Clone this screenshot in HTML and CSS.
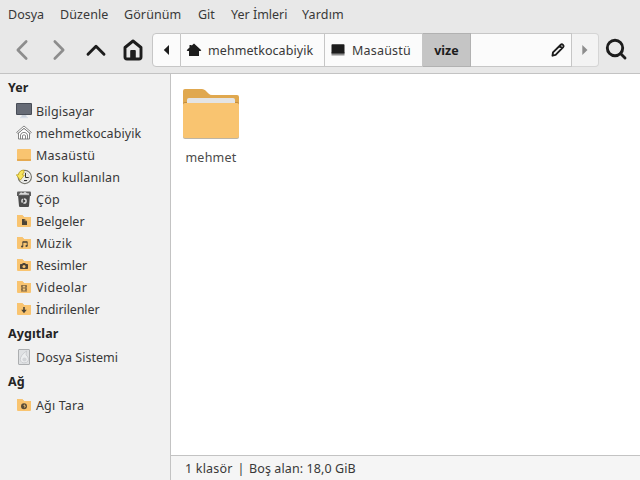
FILE: index.html
```
<!DOCTYPE html>
<html lang="tr">
<head>
<meta charset="utf-8">
<title>vize</title>
<link rel="stylesheet" href="styles.css">
</head>
<body>
<svg class="defs" width="0" height="0">
  <symbol id="folder" viewBox="0 0 16 16"><path fill="#e5ad54" d="M1 3.2Q1 2 2 2h4l2 2h6q1 0 1 1v3H1z"/><path fill="#f9c470" d="M1 3q0-1 1-1h4l2 2h6q1 0 1 1v8q0 1-1 1H2q-1 0-1-1z"/></symbol>
</svg>
<div class="window">
  <nav class="menu">
    <span class="m1">Dosya</span><span class="m2">Düzenle</span><span class="m3">Görünüm</span><span class="m4">Git</span><span class="m5">Yer İmleri</span><span class="m6">Yardım</span>
  </nav>
  <header class="toolbar">
    <svg class="tool dim" viewBox="0 0 24 24"><path d="M16.200 3.500 7.800 12l8.400 8.500"/></svg>
    <svg class="tool dim" viewBox="0 0 24 24"><path d="m7.800 3.500 8.400 8.500-8.400 8.500"/></svg>
    <svg class="tool" viewBox="0 0 24 24"><path d="m4 16.200 8-8 8 8"/></svg>
    <svg class="tool" viewBox="0 0 24 24"><path d="M4 9.500 12 3l8 6.500V19q0 2-2 2H6q-2 0-2-2z"/><path class="solid" d="M9.200 22v-9q0-1 1-1h3.600q1 0 1 1v9z"/></svg>
    <div class="path">
      <span class="seg back"><svg width="16" height="16"><path fill="#1c1c1c" d="M11 3v10L5.800 8z"/></svg></span>
      <span class="seg home"><svg width="16" height="16"><path fill="#1c1c1c" d="m8 1.500 7.300 6.800-.8.700H13v5H9.500v-4h-3v4H3V9H1.500l-.8-.7L3.500 5.600V3h2v.8z"/><path fill="#1c1c1c" d="M5 9h6v5H5z"/></svg><b>mehmetkocabiyik</b></span>
      <span class="seg desk"><svg width="16" height="16"><path fill="#8b8b8b" d="M1.500 10h13v3.500h-13z"/><path fill="#1c1c1c" d="M1.500 3q0-.8.8-.8h11.400q.8 0 .8.800v8.500h-13z"/></svg><b>Masaüstü</b></span>
      <span class="seg current"><b>vize</b></span>
      <span class="seg rest"><svg width="16" height="16" fill="none" stroke="#1c1c1c" stroke-width="1.900" stroke-linejoin="round"><path d="M2.500 13.700 3 10.400 10.800 2.800q1-1 2.200.1t.2 2.200L5.600 12.800zM9.700 4l2.500 2.500"/></svg></span>
      <span class="seg next"><svg width="16" height="16"><path fill="#8d8d8d" d="M5.300 3v10l5.200-5z"/></svg></span>
    </div>
    <svg class="tool search" viewBox="0 0 24 24"><circle cx="11" cy="11" r="7.700"/><path d="m16.500 16.500 4.500 4.500"/></svg>
  </header>
  <div class="body">
    <aside class="side">
      <h2>Yer</h2>
      <div class="row"><svg viewBox="0 0 16 16"><path fill="#ccd3dd" d="M6 11.500h4l1 3H5z"/><path fill="#d8dee8" d="M4 14h8v1.200H4z"/><rect width="16" height="12" rx="1" fill="#484d57"/><path fill="#666b76" d="M1 1h14v10H1z"/></svg><span class="wide">Bilgisayar</span></div>
      <div class="row"><svg viewBox="0 0 16 16" fill="none" stroke="#777" stroke-width=".9"><path fill="#fff" d="M2.500 8v6h11V8L8 3.300z"/><path fill="#fff" stroke-linejoin="round" d="M8 1 .7 7.300l1.100 1.200L8 3.300l6.200 5.200 1.100-1.200z"/><path d="M4.500 14v-4Q5 7.500 8 7.300q3 .2 3.500 2.700v4M6.500 14v-3.500q1.500-1.500 3 0V14"/></svg><span class="home-label">mehmetkocabiyik</span></div>
      <div class="row"><svg viewBox="0 0 16 16"><rect x="1" y="2" width="14" height="12" rx=".8" fill="#f9c470"/><path fill="#e5a950" d="M1 12h14v1.300q0 .7-.7.700H1.700Q1 14 1 13.300z"/></svg><span class="wider">Masaüstü</span></div>
      <div class="row"><svg viewBox="0 0 16 16"><circle cx="8.800" cy="8" r="6.600" fill="#fff" stroke="#77776f" stroke-width="1.200"/><circle cx="8.800" cy="8" r="4.700" fill="#ebebe4" stroke="#bbb" stroke-width=".5"/><path stroke="#333" fill="none" d="M9.500 4v4.500h3.200M8 11.500h3"/><path fill="#f7e45c" stroke="#b99b13" stroke-width=".7" d="M8 1Q3.500 1 2.300 5.800H.3l3.900 5.400 4.200-5.100-2.200-.2q.2-1.700 1.800-2z"/></svg><span class="wide">Son kullanılan</span></div>
      <div class="row"><svg viewBox="0 0 16 16"><path fill="#4c4c4c" d="M2 4h12l-1 11q0 1-1 1H4q-1 0-1-1z"/><path fill="#5d5d5d" d="M1 1.500q0-1 1-1h12q1 0 1 1V5H1z"/><path fill="#ddd" d="m3 3.300 2-2 2 1 2-1.500 2 1.400 2 .3v1.300H3z"/><circle cx="8" cy="10" r="2.100" fill="none" stroke="#ddd" stroke-width="1.500" stroke-dasharray="3.500 .9"/></svg><span class="wider">Çöp</span></div>
      <div class="row"><svg viewBox="0 0 16 16"><use href="#folder"/><path fill="#4c4437" d="M6 6h2.700L11 8.300V12H6z"/><path fill="#f9c470" d="M8.500 6v2.300H11z" opacity=".5"/></svg><span>Belgeler</span></div>
      <div class="row"><svg viewBox="0 0 16 16"><use href="#folder"/><path fill="none" stroke="#4c4437" stroke-width=".9" d="M6.800 11.500V6.700h4.400V11M6.800 7.300h4.400"/><circle cx="6.100" cy="11.500" r="1.100" fill="#4c4437"/><circle cx="10.500" cy="11" r="1.100" fill="#4c4437"/></svg><span class="wider">Müzik</span></div>
      <div class="row"><svg viewBox="0 0 16 16"><use href="#folder"/><path fill="#4c4437" d="M4.700 7h1.500l.6-1h2.400l.6 1h1.500q.7 0 .7.700v3.600q0 .7-.7.700H4.700q-.7 0-.7-.7V7.700Q4 7 4.700 7z"/><circle cx="8" cy="9.400" r="1.500" fill="#f9c470"/></svg><span>Resimler</span></div>
      <div class="row"><svg viewBox="0 0 16 16"><use href="#folder"/><path fill="#806642" d="M5 6h6v6.500H5z"/><path fill="#f1c477" d="M6.800 6.800h2.400v1.800H6.800zm0 2.700h2.400v2H6.800z"/><path stroke="#f1c477" stroke-dasharray=".7 .8" stroke-width=".6" d="M5.700 6.500v5.700m4.600-5.700v5.700"/></svg><span class="widest">Videolar</span></div>
      <div class="row"><svg viewBox="0 0 16 16"><use href="#folder"/><path fill="#4c4437" d="M7.200 6h1.600v2.800h2L8 12.200 5.200 8.800h2z"/></svg><span class="tight">İndirilenler</span></div>
      <h2>Aygıtlar</h2>
      <div class="row"><svg viewBox="0 0 16 16"><rect x="2.500" y=".500" width="11" height="15" rx=".5" fill="#dfe1e3" stroke="#acaeb0"/><path fill="#eceeef" stroke="#c0c2c5" stroke-width=".7" d="M10.500 2Q4.300 6.500 4.300 10.500a4 4 0 1 0 8-1.500Q11.500 7 10 6z"/><circle cx="8.500" cy="10.500" r="2.100" fill="#d2d4d7"/></svg><span>Dosya Sistemi</span></div>
      <h2>Ağ</h2>
      <div class="row"><svg viewBox="0 0 16 16"><use href="#folder"/><circle cx="8" cy="9.200" r="3" fill="#5a4d38"/><path fill="#dfb36b" d="M8.500 7.200 7.300 8.500l1.200 1-.6 1.700 2-1.800z"/></svg><span class="wide">Ağı Tara</span></div>
    </aside>
    <main class="main">
      <div class="files">
        <figure class="file">
          <svg width="64" height="64" viewBox="0 0 64 64"><path fill="#bdb5a6" d="M4 20h56v33q0 2-2 2H6q-2 0-2-2z"/><path fill="#e0a84f" d="M4 7q0-2 2-2h17q2 0 3.500 1.500l3 3Q31 11 33 11h25q2 0 2 2v20H4z"/><path fill="#c18d3f" d="M4 20q0-2 2-2h52q2 0 2 2z"/><path fill="#e4e4e4" d="M8 16q0-2 2-2h44q2 0 2 2v8H8z"/><path fill="#f9c470" d="M4 21q0-2 2-2h52q2 0 2 2v31q0 2-2 2H6q-2 0-2-2z"/></svg>
          <figcaption>mehmet</figcaption>
        </figure>
      </div>
      <footer class="status"><span class="s1">1 klasör</span><span class="bar">|</span><span class="s2">Boş alan: 18,0 GiB</span></footer>
    </main>
  </div>
</div>
</body>
</html>
```
FILE: styles.css
```
* { box-sizing: border-box; }
body { margin: 0; font: 12.5px/16px "Noto Sans", "Open Sans", sans-serif; color: #383838; background: #e8e8e8; }
.defs { position: absolute; }
.window { width: 640px; height: 480px; display: flex; flex-direction: column; overflow: hidden; }
span, b, figcaption { white-space: nowrap; }
.menu { height: 28px; padding: 7px 8px 0; display: flex; gap: 16px; flex: none; }
.m1 { width: 36px; } .m2 { width: 48px; letter-spacing: 0.1px; } .m3 { width: 58px; letter-spacing: 0.1px; } .m4 { width: 17px; } .m5 { width: 55px; } .m6 { width: 42px; letter-spacing: 0.15px; }
.toolbar { height: 46px; flex: none; border-bottom: 1px solid #c3c3c3; padding: 5px 0 0 10px; display: flex; align-items: flex-start; }
.tool { width: 24px; height: 24px; margin: 5px 13px 0 0; flex: none; fill: none; stroke: #1c1c1c; stroke-width: 2.9; stroke-linecap: round; stroke-linejoin: round; }
.tool.dim { stroke: #8d8d8d; stroke-width: 2.6; }
.tool .solid { fill: #1c1c1c; stroke: none; }
.toolbar .search { margin: 4px 0 0 5px; }
.path { width: 447px; height: 34px; margin-left: -6px; display: flex; flex: none; }
.seg { height: 34px; background: #fbfbfb; border: 1px solid #c6c6c6; border-left-width: 0; display: flex; align-items: center; }
.seg b { font-weight: normal; padding-top: 2px; }
.back { width: 29px; border-left-width: 1px; border-radius: 4px 0 0 4px; padding-left: 5px; }
.home { width: 144px; padding-left: 5px; gap: 6px; letter-spacing: 0.07px; }
.desk { width: 98px; padding-left: 5px; gap: 6px; letter-spacing: 0.2px; }
.seg.current { width: 48px; background: #c5c5c5; border-color: #b1b1b1; justify-content: center; color: #1c1c1c; }
.current b { font-weight: bold; }
.rest { width: 101px; justify-content: flex-end; padding-right: 5px; }
.next { width: 27px; background: #f3f3f3; border-color: #d5d5d5; border-radius: 0 4px 4px 0; padding-left: 5px; }
.body { flex: 1; display: flex; min-height: 0; }
.side { width: 171px; background: #f1f1f1; border-right: 1px solid #c3c3c3; }
.side h2 { margin: 0; height: 26px; padding: 6px 0 0 8px; font-size: 12.5px; line-height: 16px; color: #242424; letter-spacing: 0.1px; }
.row { height: 22px; padding-left: 16px; display: flex; align-items: center; gap: 4px; }
.row span { padding-top: 2px; }
.row svg { width: 16px; height: 16px; flex: none; }
.wide { letter-spacing: 0.13px; }
.wider { letter-spacing: 0.25px; }
.widest { letter-spacing: 0.35px; }
.home-label { letter-spacing: 0.07px; }
.tight { letter-spacing: -0.1px; }
.main { flex: 1; display: flex; flex-direction: column; background: #fff; }
.files { flex: 1; padding: 10px 0 0 4px; }
.file { margin: 0; width: 72px; display: flex; flex-direction: column; align-items: center; }
.file figcaption { margin-top: 2px; color: #4a4a4a; letter-spacing: 0.25px; }
.status { height: 25px; border-top: 1px solid #c3c3c3; background: #f5f5f5; padding: 5px 0 0 14px; display: flex; }
.s1 { width: 48px; letter-spacing: 0.2px; } .bar { width: 16px; text-align: center; } .s2 { letter-spacing: 0.1px; }
```
